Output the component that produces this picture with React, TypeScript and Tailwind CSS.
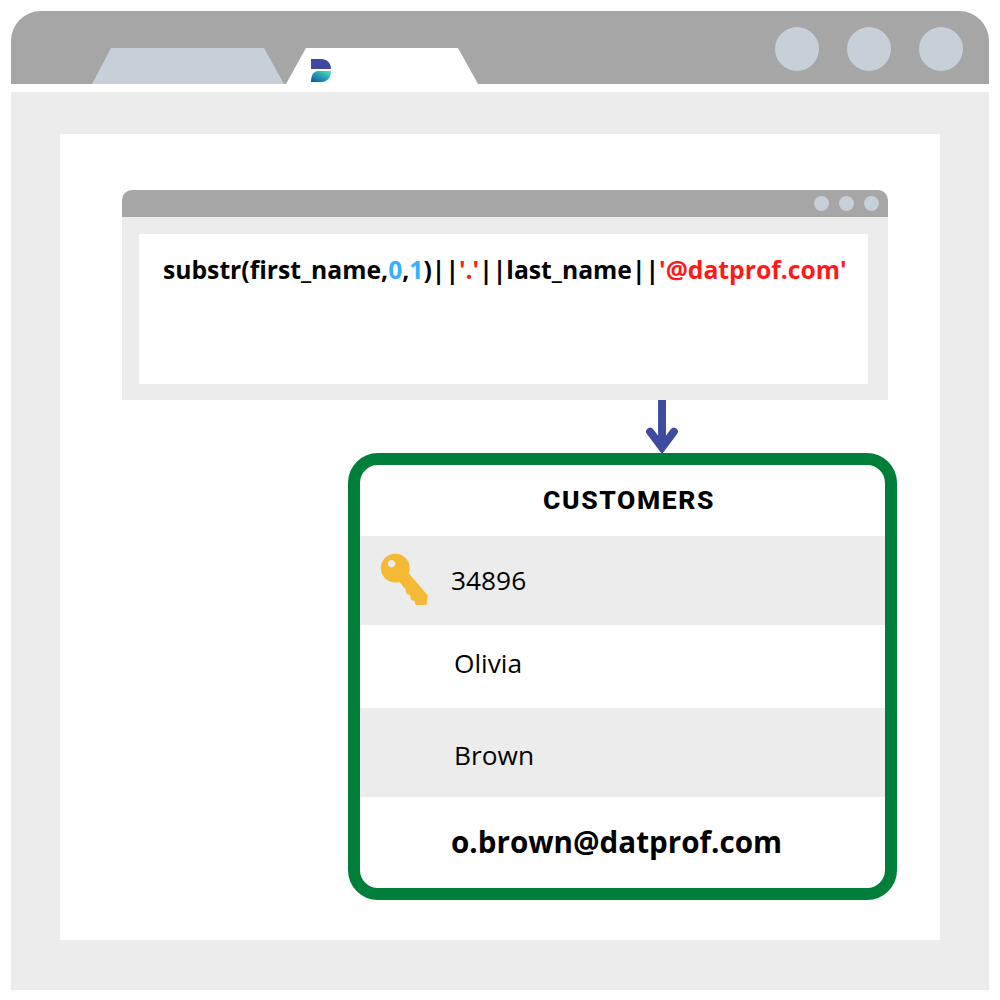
export default function App() {
  const sans = "font-['Open_Sans',sans-serif]";
  return (
    <div className={`w-[1000px] h-[1000px] bg-white pt-[11px] pl-[11px] ${sans} text-black`}>
      <div className="w-[978px]">
        {/* browser title bar */}
        <div className="h-[73px] bg-[#a6a6a6] rounded-t-[30px] flex items-end pl-[81px] pr-[26px] relative">
          <div className="w-[192px] h-[36px] bg-[#c7cfd9] [clip-path:polygon(0_100%,19px_0,172px_0,100%_100%)]" />
          <div className="w-[192px] h-[36px] ml-[2px] bg-white [clip-path:polygon(0_100%,20px_0,172px_0,100%_100%)] pl-[25px] pt-[11px]">
            <svg width="20" height="23" viewBox="0 0 20 23" className="block">
              <defs>
                <linearGradient id="logoGrad" x1="0" y1="1" x2="1" y2="0">
                  <stop offset="0" stopColor="#0b4fb0" />
                  <stop offset="1" stopColor="#43ecb2" />
                </linearGradient>
              </defs>
              <path d="M0 0H10C16 0 20 4 20 10H0Z" fill="#3f479f" />
              <path d="M7 12H20C20 18 17 23 10 23H0C0 17 2 12 7 12Z" fill="url(#logoGrad)" />
            </svg>
          </div>
          <div className="ml-auto self-start mt-[15.5px] flex gap-[28px]">
            <div className="w-[44px] h-[44px] rounded-full bg-[#c7cfd9]" />
            <div className="w-[44px] h-[44px] rounded-full bg-[#c7cfd9]" />
            <div className="w-[44px] h-[44px] rounded-full bg-[#c7cfd9]" />
          </div>
        </div>
        <div className="h-[8px] bg-white" />
        {/* browser body */}
        <div className="h-[898px] bg-[#ececec] pt-[42px] pl-[49px]">
          <div className="w-[880px] h-[806px] bg-white pt-[56px] pl-[62px]">
            {/* inner window */}
            <div className="w-[766px]">
              <div className="h-[26.5px] bg-[#a6a6a6] rounded-t-[10px] flex items-center justify-end gap-[10px] pr-[9px]">
                <div className="w-[15px] h-[15px] rounded-full bg-[#c7cfd9]" />
                <div className="w-[15px] h-[15px] rounded-full bg-[#c7cfd9]" />
                <div className="w-[15px] h-[15px] rounded-full bg-[#c7cfd9]" />
              </div>
              <div className="h-[183px] bg-[#ececec] pt-[17.5px] pl-[17px]">
                <div className="w-[729px] h-[150px] bg-white pl-[24px] pt-[18px] text-[24.7px] leading-[36px] font-bold whitespace-nowrap">
                  substr(first_name,<span className="text-[#38b0ff]">0</span>,<span className="text-[#38b0ff]">1</span>)||<span className="text-[#ff1a1a]">'.'</span>||last_name||<span className="text-[#ff1a1a]">'@datprof.com'</span>
                </div>
              </div>
            </div>
            {/* arrow */}
            <svg width="34" height="53.5" viewBox="0 0 34 54" className="block ml-[523px]">
              <path d="M17 0V48" stroke="#3f4b9f" strokeWidth="8" fill="none" />
              <path d="M5 32L17 48L29 32" stroke="#3f4b9f" strokeWidth="8" strokeLinecap="round" fill="none" />
            </svg>
            {/* customers table */}
            <div className="w-[549px] h-[447px] ml-[226px] border-[12px] border-[#007f3a] rounded-[30px] overflow-hidden flex flex-col">
              <div className="h-[71px] flex items-center justify-center pl-[13px] pb-[2px] font-['Roboto',sans-serif] font-extrabold text-[26.5px] tracking-[1.6px]">
                CUSTOMERS
              </div>
              <div className="h-[89px] bg-[#ececec] flex items-center pl-[20px] text-[26.3px]">
                <svg width="49" height="53" viewBox="120 310 145 158" className="block mb-[3px]">
                  <path
                    fillRule="evenodd"
                    fill="#f4b935"
                    d="M165 312C189 312 208 331 208 355C208 361 207 366 205 370L262 437L258 465L226 465L222 452L212 450L209 435L198 431L196 419L178 397C174 397 170 398 165 398C141 398 122 379 122 355C122 331 141 312 165 312ZM154 331C148 331 143 336 143 342C143 348 148 353 154 353C160 353 165 348 165 342C165 336 160 331 154 331Z"
                  />
                </svg>
                <span className="ml-[22px]">34896</span>
              </div>
              <div className="h-[83px] flex items-center pl-[94px] text-[26.3px] pb-[6px]">Olivia</div>
              <div className="h-[89px] bg-[#ececec] flex items-center pl-[94px] text-[26.3px] pt-[7px]">Brown</div>
              <div className="flex-1 flex items-center pl-[91px] text-[29.6px] font-bold pb-[1px]">o.brown@datprof.com</div>
            </div>
          </div>
        </div>
      </div>
    </div>
  );
}
